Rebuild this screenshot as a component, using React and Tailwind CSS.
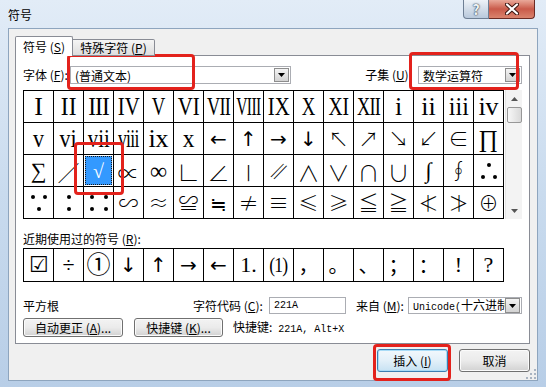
import React from 'react';

const ui = "font-['Noto_Sans_CJK_SC','Noto_Sans',sans-serif]";
const mono = "font-['Liberation_Mono','DejaVu_Sans_Mono',monospace]";
const serif = "font-['Liberation_Serif','DejaVu_Serif','Noto_Sans_CJK_SC',serif]";

const R = ({ t, s }) => (
    <span className={`inline-block ${serif} text-[26px] leading-none ${s}`}>{t}</span>
);
const S = ({ t, s = 'text-[20px]' }) => (
    <span className={`inline-block ${serif} leading-none ${s}`}>{t}</span>
);
// symbols taken from the CJK face (thin, tall, like SimSun)
const C = ({ t, s = 'text-[20px]' }) => (
    <span className={`inline-block font-['Noto_Sans_CJK_SC',sans-serif] font-light leading-none ${s}`}>{t}</span>
);
// arrows
const A = ({ t, s = 'text-[20px]' }) => (
    <span className={`inline-block font-['DejaVu_Sans',sans-serif] text-black leading-none ${s}`}>{t}</span>
);

const Dot = () => <span className="block w-[4px] h-[4px] rounded-full bg-black" />;

const Because = () => (
    <span className="flex flex-col items-center gap-[8px]">
        <span className="flex gap-[8px]">
            <Dot />
            <Dot />
        </span>
        <Dot />
    </span>
);
const Therefore = () => (
    <span className="flex flex-col items-center gap-[8px]">
        <Dot />
        <span className="flex gap-[8px]">
            <Dot />
            <Dot />
        </span>
    </span>
);
const Ratio = () => (
    <span className="flex flex-col gap-[8px]">
        <Dot />
        <Dot />
    </span>
);
const Proportion = () => (
    <span className="grid grid-cols-2 gap-x-[10px] gap-y-[8px]">
        <Dot />
        <Dot />
        <Dot />
        <Dot />
    </span>
);

const rows = [
    [
        <R t="I" s="" />,
        <R t="II" s="scale-x-[0.9]" />,
        <R t="III" s="scale-x-[0.9] tracking-[-1px]" />,
        <R t="IV" s="scale-x-[0.8]" />,
        <R t="V" s="scale-x-[0.72]" />,
        <R t="VI" s="scale-x-[0.8]" />,
        <R t="VII" s="scale-x-[0.7] tracking-[-1px]" />,
        <R t="VIII" s="scale-x-[0.6] tracking-[-1px]" />,
        <R t="IX" s="scale-x-[0.8]" />,
        <R t="X" s="scale-x-[0.72]" />,
        <R t="XI" s="scale-x-[0.75]" />,
        <R t="XII" s="scale-x-[0.7] tracking-[-1px]" />,
        <R t="i" s="" />,
        <R t="ii" s="" />,
        <R t="iii" s="scale-x-[0.92]" />,
        <R t="iv" s="" />,
    ],
    [
        <R t="v" s="scale-x-[0.85]" />,
        <R t="vi" s="scale-x-[0.85]" />,
        <R t="vii" s="scale-x-[0.8]" />,
        <R t="viii" s="scale-x-[0.68] tracking-[-1px]" />,
        <R t="ix" s="" />,
        <R t="x" s="scale-x-[0.9]" />,
        <A t="←" />,
        <A t="↑" />,
        <A t="→" />,
        <A t="↓" />,
        <C t="↖" />,
        <C t="↗" />,
        <C t="↘" />,
        <C t="↙" />,
        <C t="∈" />,
        <S t="∏" s="text-[24px]" />,
    ],
    [
        <S t="∑" s="text-[22px]" />,
        <C t="∕" s="text-[22px]" />,
        <S t="√" s="text-[20px] text-white" />,
        <C t="∝" s="text-[22px]" />,
        <S t="∞" s="text-[24px]" />,
        <C t="∟" s="text-[22px]" />,
        <C t="∠" s="text-[22px]" />,
        <C t="∣" s="text-[22px]" />,
        <C t="∥" s="text-[20px] -skew-x-[25deg]" />,
        <C t="∧" s="text-[22px]" />,
        <C t="∨" s="text-[22px]" />,
        <C t="∩" s="text-[22px]" />,
        <C t="∪" s="text-[22px]" />,
        <S t="∫" s="text-[22px]" />,
        <C t="∮" s="text-[20px]" />,
        <Therefore />,
    ],
    [
        <Because />,
        <Ratio />,
        <Proportion />,
        <C t="∽" />,
        <C t="≈" />,
        <C t="≌" />,
        <C t="≒" />,
        <C t="≠" />,
        <C t="≡" />,
        <C t="≤" />,
        <C t="≥" />,
        <C t="≦" />,
        <C t="≧" />,
        <C t="≮" />,
        <C t="≯" />,
        <C t="⊕" />,
    ],
];

const cjk = "font-['Noto_Sans_CJK_SC',sans-serif]";

const recent = [
    <S t="☑" s="text-[22px] font-['DejaVu_Sans',sans-serif]" />,
    <S t="÷" s="text-[22px]" />,
    <S t="①" s="text-[24px] font-['DejaVu_Sans','Noto_Sans_CJK_SC',sans-serif]" />,
    <A t="↓" />,
    <A t="↑" />,
    <A t="→" />,
    <A t="←" />,
    <S t="1." s="text-[22px]" />,
    <S t="(1)" s="text-[22px] scale-x-[0.8] tracking-[-1px]" />,
    <S t="，" s={`text-[20px] ${cjk}`} />,
    <S t="。" s={`text-[20px] ${cjk}`} />,
    <S t="、" s={`text-[20px] ${cjk}`} />,
    <S t="；" s={`text-[20px] ${cjk}`} />,
    <S t="：" s={`text-[20px] ${cjk}`} />,
    <S t="!" s="text-[22px]" />,
    <S t="?" s="text-[22px]" />,
];

const Arrow = ({ up }) => (
    <svg width="7" height="4" viewBox="0 0 7 4">
        <polygon points={up ? '0,4 3.5,0 7,4' : '0,0 7,0 3.5,4'} fill="#555" />
    </svg>
);

const DropBtn = ({ h }) => (
    <span className={`${h} w-[15px] shrink-0 border border-[#8d8d8d] bg-linear-to-b from-[#f4f4f4] to-[#d3d3d3] flex items-center justify-center`}>
        <svg width="7" height="4" viewBox="0 0 7 4">
            <polygon points="0,0 7,0 3.5,4" fill="#000" />
        </svg>
    </span>
);

const Combo = ({ w, h, children }) => (
    <div className={`${w} h-full flex items-center bg-white border border-[#abadb3] pl-[4px] pr-px`}>
        <div className="flex-1 min-w-0 overflow-hidden whitespace-nowrap leading-[15px]">{children}</div>
        <DropBtn h={h} />
    </div>
);

const Btn = ({ w, def, children }) => (
    <div
        className={
            def
                ? `${w} h-full flex items-center justify-center rounded-[3px] border border-[#3c7fb1] bg-linear-to-b from-[#f2f8fc] via-[#e3f0f9] to-[#c7e2f3] shadow-[inset_0_0_0_1px_#a9dcf7]`
                : `${w} h-full flex items-center justify-center rounded-[3px] border border-[#707070] bg-linear-to-b from-[#f3f3f3] via-[#ebebeb] to-[#d2d2d2] shadow-[inset_0_0_0_1px_#fbfbfb]`
        }
    >
        {children}
    </div>
);

const RedBox = ({ pos }) => (
    <div className={`absolute ${pos} border-[3px] border-[#e3221c] rounded-[4px] pointer-events-none`} />
);

export default function App() {
    return (
        <div
            className={`relative w-[546px] h-[387px] overflow-hidden flex flex-col bg-linear-to-b from-[#e2ecf7] via-[#c9dbee] to-[#b8cee7] text-[12px] text-black ${ui}`}
        >
            {/* title bar */}
            <div className="h-[28px] flex justify-between pl-[8px] pr-[11px]">
                <span className="mt-[5px] text-[12px] leading-[20px]">符号</span>
                <div className="flex h-[19px]">
                    <div className="w-[26px] rounded-bl-[4px] border border-t-0 border-[#6e7f94] bg-linear-to-b from-[#eef3f8] via-[#d3dde9] to-[#b9c9dc] flex items-center justify-center">
                        <span className="text-[14px] font-bold leading-none text-[#eef2f6] [text-shadow:0_0_2px_#2c3a4b,0_0_1px_#2c3a4b]">
                            ?
                        </span>
                    </div>
                    <div className="w-[46px] rounded-br-[4px] border border-t-0 border-l-0 border-[#6b2b24] bg-linear-to-b from-[#e9a99a] via-[#c95a4a] to-[#d9836e] flex items-center justify-center">
                        <svg width="14" height="12" viewBox="0 0 14 12">
                            <path d="M2 1.5 L12 10.5 M12 1.5 L2 10.5" stroke="#3b1510" strokeWidth="4.2" strokeLinecap="round" />
                            <path d="M2 1.5 L12 10.5 M12 1.5 L2 10.5" stroke="#fff" strokeWidth="2.2" strokeLinecap="round" />
                        </svg>
                    </div>
                </div>
            </div>

            {/* client area */}
            <div className="relative mx-[8px] h-[353px] bg-[#f0f0f0] border border-[#8ea5be] flex flex-col pl-[6px] pr-[7px] pt-[7px]">
                {/* tabs */}
                <div className="relative z-10 -mb-px flex items-end h-[20px]">
                    <div className="w-[58px] h-[20px] bg-white border border-b-0 border-[#898c95] rounded-t-[2px] flex items-center justify-center">
                        符号 (<u>S</u>)
                    </div>
                    <div className="w-[82px] h-[17px] border border-l-0 border-[#898c95] rounded-tr-[2px] bg-linear-to-b from-[#f5f5f5] to-[#dedede] flex items-center justify-center">
                        特殊字符 (<u>P</u>)
                    </div>
                </div>

                {/* tab page */}
                <div className="w-[515px] bg-white border border-[#898c95] pt-[10px] px-[7px] pb-[6px] flex flex-col">
                    <div className="h-[18px] flex items-center">
                        <span className="w-[47px] whitespace-nowrap">
                            字体 (<u>F</u>):
                        </span>
                        <Combo w="w-[221px]" h="h-[14px]">(普通文本)</Combo>
                        <span className="ml-auto mr-[6px] whitespace-nowrap">
                            子集 (<u>U</u>):
                        </span>
                        <Combo w="w-[104px]" h="h-[14px]">数学运算符</Combo>
                    </div>

                    {/* symbol grid */}
                    <div className="mt-[6px] flex">
                        <div className="w-[481px] grid grid-cols-[repeat(16,30px)] border-l border-t border-black">
                            {rows.map((row, ri) =>
                                row.map((cell, ci) =>
                                    ri === 2 && ci === 2 ? (
                                        <div key={`${ri}-${ci}`} className="h-[32px] border-r border-b border-black p-px">
                                            <div className="w-full h-full bg-[#3399ff] border border-dotted border-[#1a1a1a] flex items-center justify-center">
                                                {cell}
                                            </div>
                                        </div>
                                    ) : (
                                        <div
                                            key={`${ri}-${ci}`}
                                            className="h-[32px] border-r border-b border-black flex items-center justify-center"
                                        >
                                            {cell}
                                        </div>
                                    )
                                )
                            )}
                        </div>
                        <div className="ml-[1px] w-[17px] h-[129px] bg-[#f3f3f3] border-l border-[#e4e4e4] flex flex-col items-center">
                            <div className="h-[17px] flex items-center justify-center">
                                <Arrow up />
                            </div>
                            <div className="w-[15px] h-[16px] rounded-[2px] border border-[#979797] bg-linear-to-r from-[#f7f7f7] to-[#d9d9d9]" />
                            <div className="flex-1" />
                            <div className="h-[17px] flex items-center justify-center">
                                <Arrow />
                            </div>
                        </div>
                    </div>

                    <div className="mt-[12px] h-[16px] leading-[16px]">
                        近期使用过的符号 (<u>R</u>):
                    </div>
                    <div className="mt-[1px] w-[481px] h-[34px] border border-black flex">
                        {recent.map((cell, i) => (
                            <div
                                key={i}
                                className={
                                    i === recent.length - 1
                                        ? 'w-[29px] h-full flex items-center justify-center'
                                        : 'w-[30px] h-full border-r border-black flex items-center justify-center'
                                }
                            >
                                {cell}
                            </div>
                        ))}
                    </div>

                    <div className="mt-[15px] h-[17px] flex items-center">
                        <span className="w-[170px]">平方根</span>
                        <span className="w-[76px] whitespace-nowrap">
                            字符代码 (<u>C</u>):
                        </span>
                        <div className={`w-[77px] h-full bg-white border border-[#abadb3] pl-[4px] flex items-center text-[10px] ${mono}`}>
                            221A
                        </div>
                        <span className="ml-[10px] w-[52px] whitespace-nowrap">
                            来自 (<u>M</u>):
                        </span>
                        <Combo w="w-[114px]" h="h-[15px]">
                            <span className={`text-[10px] ${mono}`}>Unicode(</span>十六进制
                        </Combo>
                    </div>

                    <div className="mt-[4px] h-[19px] flex items-center">
                        <Btn w="w-[100px]">
                            自动更正 (<u>A</u>)...
                        </Btn>
                        <div className="ml-[11px] h-full">
                            <Btn w="w-[89px]">
                                快捷键 (<u>K</u>)...
                            </Btn>
                        </div>
                        <span className="ml-[10px] whitespace-nowrap">
                            快捷键:<span className={`text-[10px] ${mono}`}> 221A, Alt+X</span>
                        </span>
                    </div>
                </div>

                {/* dialog buttons */}
                <div className="mt-[5px] h-[23px] flex justify-end gap-[11px]">
                    <Btn w="w-[71px]" def>
                        插入 (<u>I</u>)
                    </Btn>
                    <Btn w="w-[71px]">取消</Btn>
                </div>

                {/* resize grip */}
                <svg className="absolute right-[1px] bottom-[1px]" width="11" height="11" viewBox="0 0 11 11">
                    {[
                        [9, 1],
                        [9, 5],
                        [5, 5],
                        [9, 9],
                        [5, 9],
                        [1, 9],
                    ].map(([x, y], i) => (
                        <rect key={i} x={x} y={y} width="2" height="2" fill="#a9b4c2" />
                    ))}
                </svg>
            </div>

            <RedBox pos="left-[67px] top-[54px] w-[128px] h-[36px]" />
            <RedBox pos="left-[409px] top-[52px] w-[110px] h-[38px]" />
            <RedBox pos="left-[74px] top-[142px] w-[50px] h-[53px]" />
            <RedBox pos="left-[373px] top-[344px] w-[78px] h-[37px]" />
        </div>
    );
}
